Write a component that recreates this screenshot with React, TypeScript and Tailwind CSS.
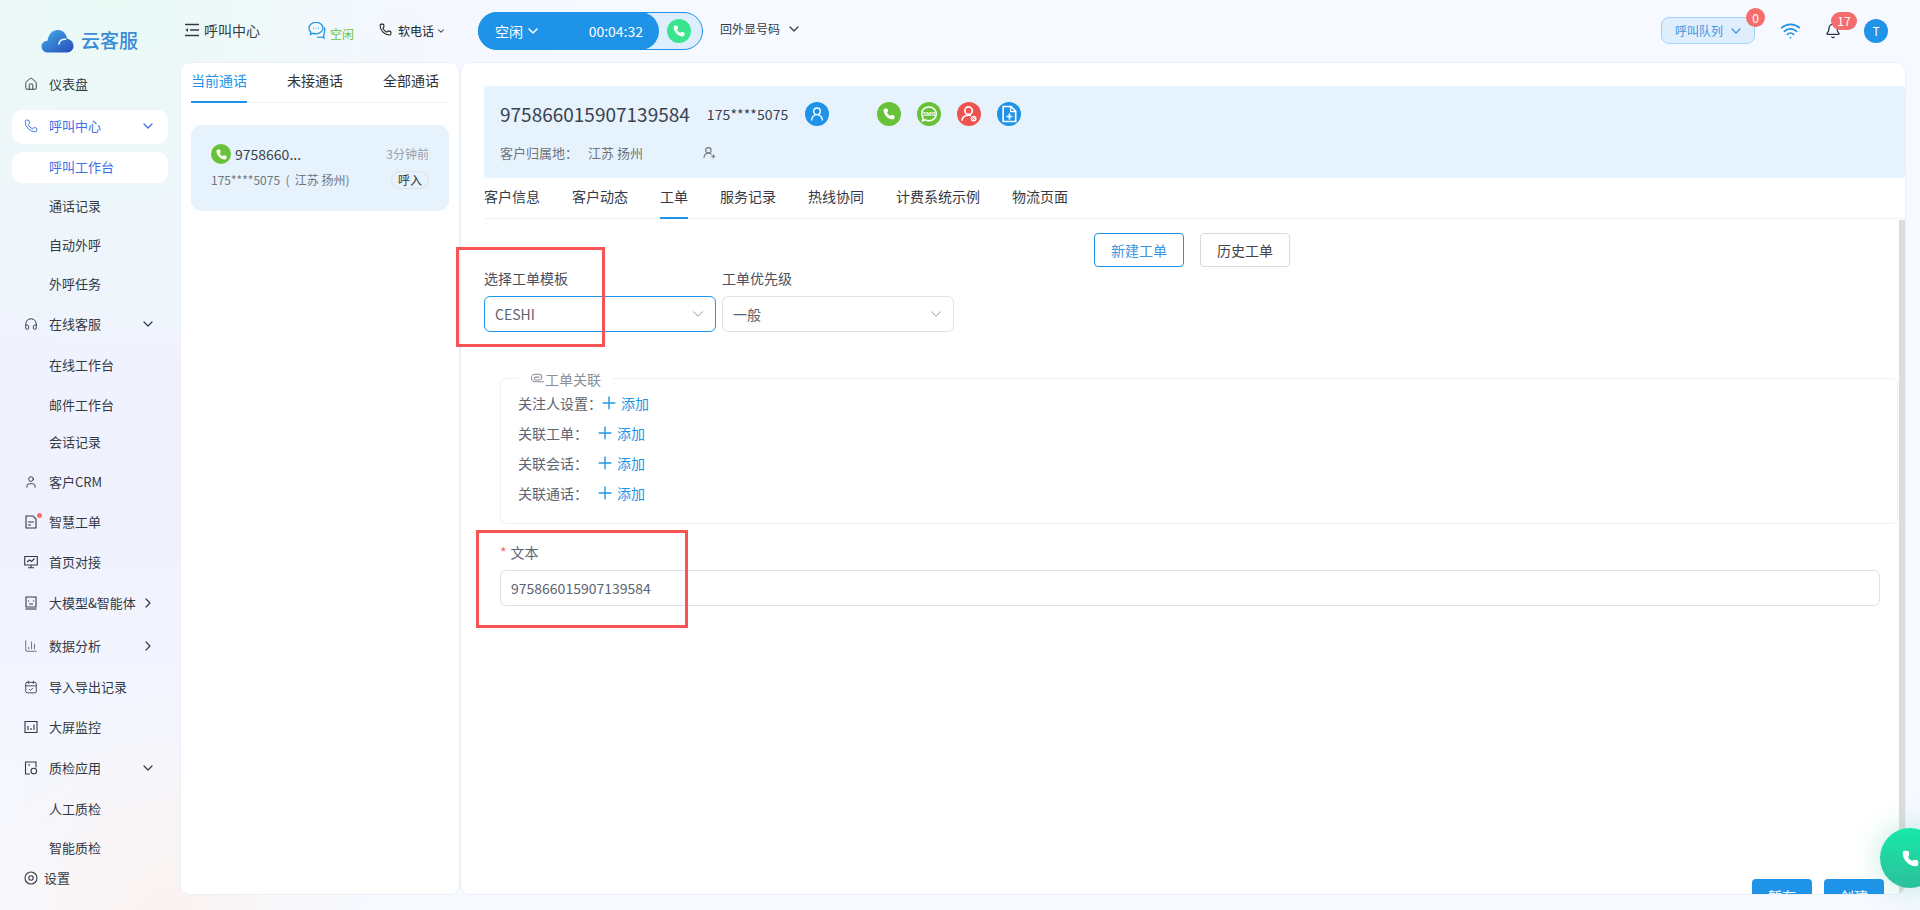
import React from "react";
import { ChevronDown, ChevronRight, House, Headphones, User, Phone, Wifi, Bell, UserRound, Plus, UserRoundPlus, ChartColumn, CalendarCheck } from "lucide-react";

const F = "font-['Noto_Sans_CJK_SC','Noto_Sans',sans-serif]";

const ic = "w-[14px] h-[14px] stroke-[1.6]";

function S({ children, className = "w-[14px] h-[14px]" }: { children: React.ReactNode; className?: string }) {
  return (
    <svg viewBox="0 0 14 14" fill="none" stroke="currentColor" strokeWidth="1.100" className={className}>
      {children}
    </svg>
  );
}

type Row = { t: string; h: string; icon?: React.ReactNode; chev?: "d" | "r"; kind?: "sub" | "active" | "open"; };
const rows: Row[] = [
  { t: "仪表盘", h: "h-[38px] pb-[2px]", icon: <House className={ic} /> },
  { t: "呼叫中心", h: "h-[34px] mt-[6px] pb-[2px]", icon: <Phone className={ic} />, chev: "d", kind: "open" },
  { t: "呼叫工作台", h: "h-[31px] mt-[8px] pb-[2px]", kind: "active" },
  { t: "通话记录", h: "h-[39px] mt-[4px] pb-[2px]", kind: "sub" },
  { t: "自动外呼", h: "h-[39px] pb-[2px]", kind: "sub" },
  { t: "外呼任务", h: "h-[39px] pb-[2px]", kind: "sub" },
  { t: "在线客服", h: "h-[41px] pb-[2px]", icon: <Headphones className={ic} />, chev: "d" },
  { t: "在线工作台", h: "h-[42px] pb-[2px]", kind: "sub" },
  { t: "邮件工作台", h: "h-[37px] pb-[2px]", kind: "sub" },
  { t: "会话记录", h: "h-[38px] pb-[2px]", kind: "sub" },
  { t: "客户CRM", h: "h-[40px]", icon: <User className={ic} /> },
  {
    t: "智慧工单", h: "h-[40px]", icon: (
      <S><path d="M2 1h7l3 3v9H2z" /><path d="M4 7h6M4 10h3" /></S>
    )
  },
  {
    t: "首页对接", h: "h-[40px]", icon: (
      <S><path d="M.7 1.500h12.600v8.500H.7z" /><path d="M3 7l2.500-2 2 1.500 3-3M7 10v2.500M4 12.800h6" /></S>
    )
  },
  {
    t: "大模型&智能体", h: "h-[42px]", icon: (
      <S><path d="M2 1h10v10H2z" /><path d="M1.500 13h11" /><path d="M4.500 4.500v1M9.500 4.500v1M5 8h4" /></S>
    ), chev: "r"
  },
  { t: "数据分析", h: "h-[44px]", icon: <ChartColumn className="w-[14px] h-[14px] stroke-[1.200]" />, chev: "r" },
  { t: "导入导出记录", h: "h-[38px]", icon: <CalendarCheck className="w-[14px] h-[14px] stroke-[1.500]" /> },
  {
    t: "大屏监控", h: "h-[42px]", icon: (
      <S><path d="M1 1.500h12v11H1z" /><path d="M4 10V6M7 10V8M10 10V4.500" /></S>
    )
  },
  {
    t: "质检应用", h: "h-[40px]", icon: (
      <S><path d="M6 13H1.500V1H12v5.500" /><circle cx="9.800" cy="10" r="2.800" /><path d="M4 4h2" /></S>
    ), chev: "d"
  },
  { t: "人工质检", h: "h-[42px]", kind: "sub" },
  { t: "智能质检", h: "h-[36px]", kind: "sub" },
];

function Sidebar() {
  return (
    <aside className="w-[180px] shrink-0 flex flex-col h-[910px] overflow-hidden">
      <div className="h-[66px] shrink-0 flex items-start pt-[27px] pl-[41px] gap-[7px]">
        <svg width="33" height="24" viewBox="0 0 33 24" className="mt-[2px]">
          <defs><linearGradient id="cl" x1="0" y1="0" x2="1" y2="1"><stop offset="0" stopColor="#3fb0ea" /><stop offset="1" stopColor="#2a49b8" /></linearGradient></defs>
          <path d="M7 23.500C3 23.500 .5 20.800 .5 17.500 .5 14.500 3 12 6.500 11.800 7.500 5 11.500 1 17 1 22 1 25.500 5 26 9.800 30 10.500 32.500 13.500 32.500 17 32.500 20.500 30 23.500 26 23.500Z" fill="url(#cl)" />
          <path d="M18 15c.3-3 3-5 6.500-4.800" stroke="#fff" strokeWidth="1.600" fill="none" strokeLinecap="round" />
        </svg>
        <span className="text-[19px] leading-[26px] font-medium text-[#3a8bd8]">云客服</span>
      </div>
      <nav className="flex flex-col shrink-0">
        {rows.map((r) => {
          const blue = r.kind === "open" || r.kind === "active";
          const box = blue ? "bg-white rounded-[10px]" : "";
          return (
            <div key={r.t} className={`${r.h} ${box} shrink-0 mx-[12px] flex items-center pl-[12px] text-[13px] ${blue ? "text-[#3f6fe8]" : "text-[#333a45]"}`}>
              <span className="w-[25px] shrink-0 flex relative">
                {r.icon}
                {r.t === "智慧工单" && <span className="absolute left-[13px] top-[-2px] w-[5px] h-[5px] rounded-full bg-[#f56c6c]" />}
              </span>
              <span className="whitespace-nowrap">{r.t}</span>
              {r.chev === "d" && <ChevronDown className="w-[16px] h-[16px] stroke-[1.800] ml-auto mr-[12px]" />}
              {r.chev === "r" && <ChevronRight className="w-[16px] h-[16px] stroke-[1.800] ml-auto mr-[12px]" />}
            </div>
          );
        })}
      </nav>
      <div className="flex items-center pl-[24px] gap-[6px] text-[13px] text-[#333a45] mt-[2px] h-[20px]">
        <S><circle cx="7" cy="7" r="6" /><circle cx="7" cy="7" r="2.200" /></S>
        <span>设置</span>
      </div>
    </aside>
  );
}

function Header() {
  return (
    <header className="h-[62px] shrink-0 flex items-center text-[12px] text-[#333a45] relative">
      <svg viewBox="0 0 14 14" className="w-[14px] h-[14px] ml-[5px] mt-[-2px]" fill="none" stroke="#333a45" strokeWidth="1.300">
        <path d="M0 1.500h14M5 7h9M0 12.500h14" />
        <path d="M3 5v4L.5 7z" fill="#333a45" stroke="none" />
      </svg>
      <span className="ml-[5px] text-[14px] mt-[-2px]">呼叫中心</span>
      <svg viewBox="0 0 18 18" className="w-[18px] h-[18px] ml-[48px] mt-[-3px]" fill="none" stroke="#2196e8" strokeWidth="1.300">
        <path d="M8 1.200c-3.800 0-7 2.700-7 6 0 1.700.8 3 2 4l-.6 2.300 2.800-1.200c.9.300 1.800.5 2.800.5 3.800 0 7-2.700 7-5.800 0-3.200-3.200-5.800-7-5.800z" />
        <path d="M16.500 6.500c.7 3.500-.5 7-1 8.500l.6 2-2.600-1c-1.500.5-3 .5-4.500 0" />
        <path d="M5 7.200h.6M7.700 7.200h.6M10.400 7.200h.6" strokeWidth="1.400" />
      </svg>
      <span className="text-[12px] text-[#67c23a] ml-[4px] mt-[6px]">空闲</span>
      <Phone className="w-[13px] h-[13px] ml-[25px] mt-[-3px] text-[#222]" />
      <span className="ml-[6px] mt-[-1px] text-[#222]">软电话</span>
      <ChevronDown className="w-[10px] h-[10px] ml-[2px] stroke-[2.500]" />
      <div className="ml-[32px] w-[225px] h-[38px] rounded-[19px] border border-[#1f93e8] bg-[#dfeefc] flex items-center justify-between">
        <div className="w-[181px] h-[38px] rounded-[19px] bg-[#1f93e8] text-white flex items-center text-[14px] pl-[17px] shrink-0 ml-[-1px]">
          <span>空闲</span>
          <ChevronDown className="w-[16px] h-[16px] ml-[2px] stroke-[2.200]" />
          <span className="ml-[auto] mr-[16px]">00:04:32</span>
        </div>
        <span className="w-[24px] h-[24px] rounded-full bg-[#3ae58f] flex items-center justify-center mr-[11px]">
          <Phone className="w-[12px] h-[12px] text-white fill-white" />
        </span>
      </div>
      <span className="ml-[17px] mt-[-4px] text-[12px]">回外显号码</span>
      <ChevronDown className="w-[16px] h-[16px] ml-[6px] mt-[-4px] stroke-[1.800]" />
      <div className="ml-auto flex items-center relative mr-[32px] mt-[-1px]">
        <div className="w-[94px] h-[27px] rounded-[8px] bg-[#dfeefc] border border-[#a3d3fa] text-[#3d94e0] text-[12px] flex items-center pl-[13px] relative">
          呼叫队列
          <ChevronDown className="w-[16px] h-[16px] ml-[5px] stroke-[1.800]" />
          <span className="absolute right-[-11px] top-[-10px] w-[19px] h-[19px] rounded-full bg-[#f56c6c] text-white text-[12px] flex items-center justify-center">0</span>
        </div>
        <Wifi className="w-[21px] h-[21px] text-[#1f93e8] ml-[25px]" />
        <div className="relative ml-[24px]">
          <Bell className="w-[16px] h-[16px] text-[#2c3345]" />
          <span className="absolute left-[6px] top-[-11px] w-[26px] h-[18px] rounded-full bg-[#f56c6c] text-white text-[12px] flex items-center justify-center">17</span>
        </div>
        <span className="ml-[23px] w-[24px] h-[24px] rounded-full bg-[#1f93e8] text-white text-[12px] flex items-center justify-center">T</span>
      </div>
    </header>
  );
}

function ListPanel() {
  return (
    <section className="w-[280px] shrink-0 bg-white rounded-[10px] border border-[#eceff6] flex flex-col px-[10px] h-[833px]">
      <div className="flex justify-between h-[40px] border-b border-[#eef0f4] text-[14px] text-[#333]">
        <span className="text-[#2196e8] border-b-2 border-[#1f93e8] h-[40px] leading-[34px] w-[56px]">当前通话</span>
        <span className="leading-[34px] ml-[40px]">未接通话</span>
        <span className="leading-[34px] ml-[40px] mr-[10px]">全部通话</span>
      </div>
      <div className="mt-[22px] h-[86px] rounded-[10px] bg-[#e6f2fc] px-[20px] pt-[19px]">
        <div className="flex items-center h-[20px]">
          <span className="w-[20px] h-[20px] rounded-full bg-[#67c23a] flex items-center justify-center">
            <Phone className="w-[11px] h-[11px] text-white fill-white" />
          </span>
          <span className="ml-[4px] text-[14px] text-[#3a4250]">9758660...</span>
          <span className="ml-auto text-[12px] text-[#9aa1ab]">3分钟前</span>
        </div>
        <div className="flex items-center h-[18px] mt-[7px]">
          <span className="text-[12px] text-[#70757d] whitespace-pre">175****5075  (  江苏 扬州)</span>
          <span className="ml-auto w-[38px] h-[18px] rounded-full border border-[#e0e3e8] text-[12px] text-[#333] flex items-center justify-center">呼入</span>
        </div>
      </div>
    </section>
  );
}

function Circle({ cls, children }: { cls: string; children: React.ReactNode }) {
  return <span className={`w-[24px] h-[24px] rounded-full flex items-center justify-center text-white shrink-0 ${cls}`}>{children}</span>;
}

const selectCls = "w-[232px] h-[36px] rounded-[6px] bg-white flex items-center pl-[10px] pr-[8px] text-[14px] text-[#5c6470]";

function Assoc({ label, w }: { label: string; w: string }) {
  return (
    <div className="h-[30px] flex items-center text-[14px] text-[#5c6470]">
      <span className={w}>{label}</span>
      <Plus className="w-[20px] h-[20px] mx-[-4px] text-[#2196e8] stroke-[1.700]" />
      <span className="ml-[6px] text-[#2196e8]">添加</span>
    </div>
  );
}

function Main() {
  return (
    <section className="relative w-[1446px] shrink-0 bg-white rounded-[10px] border border-[#eceff6] h-[833px] overflow-hidden">
      <div className="ml-[23px] mt-[23px] h-[92px] bg-[#e6f2fc] rounded-[4px] pl-[16px] pt-[16px]">
        <div className="flex items-center h-[24px]">
          <span className="text-[19px] text-[#3a4250]">975866015907139584</span>
          <span className="ml-[17px] text-[14px] text-[#3a4250] tracking-[0.1px]">175****5075</span>
          <Circle cls="bg-[#1f93e8] ml-[17px]"><UserRound className="w-[16px] h-[16px]" /></Circle>
          <Circle cls="bg-[#67c23a] ml-[48px]"><Phone className="w-[12px] h-[12px] fill-white" /></Circle>
          <Circle cls="bg-[#67c23a] ml-[16px]">
            <svg viewBox="0 0 24 24" className="w-[20px] h-[20px]">
              <path d="M12 3.500c-5 0-8.800 3.600-8.800 8.300 0 2 .7 3.800 1.900 5.200l-.8 3.200 3.500-1.200c1.300.7 2.700 1.100 4.200 1.100 5 0 8.800-3.700 8.800-8.300S17 3.500 12 3.500z" fill="none" stroke="#fff" strokeWidth="1.800" />
              <text x="12" y="14.300" textAnchor="middle" fontSize="7" fontWeight="700" fill="#fff" fontFamily="Liberation Sans, sans-serif">SMS</text>
            </svg>
          </Circle>
          <Circle cls="bg-[#ef5350] ml-[16px]">
            <svg viewBox="0 0 24 24" className="w-[20px] h-[20px]" fill="none" stroke="#fff" strokeWidth="2">
              <circle cx="11.500" cy="8" r="4.500" />
              <path d="M3.500 20c.5-4 3.500-6.500 8-6.500 1 0 2 .1 2.800.4" />
              <circle cx="17.500" cy="17.500" r="3.500" fill="#fff" stroke="none" />
              <path d="M16 16l3 3M19 16l-3 3" stroke="#ef5350" strokeWidth="1" />
            </svg>
          </Circle>
          <Circle cls="bg-[#1f93e8] ml-[16px]">
            <svg viewBox="0 0 24 24" className="w-[20px] h-[20px]" fill="none" stroke="#fff" strokeWidth="2">
              <path d="M5 3h9.500L20 8.500V21H5z" />
              <path d="M14 3v6h6" strokeWidth="1.500" />
              <path d="M12.500 11.500v7M9 15h7" />
            </svg>
          </Circle>
        </div>
        <div className="flex items-center mt-[17px] text-[13px] text-[#70757d]">
          <span>客户归属地：</span>
          <span className="ml-[10px]">江苏 扬州</span>
          <UserRoundPlus className="ml-[60px] w-[13px] h-[13px]" />
        </div>
      </div>
      <div className="ml-[23px] h-[41px] border-b border-[#eef0f4] flex gap-[32px] text-[14px] text-[#333a45]">
        {["客户信息", "客户动态", "工单", "服务记录", "热线协同", "计费系统示例", "物流页面"].map((t) => (
          <span key={t} className={`h-[41px] leading-[36px] ${t === "工单" ? "border-b-2 border-[#1f93e8]" : ""}`}>{t}</span>
        ))}
      </div>
      <div className="absolute right-0 top-[157px] bottom-0 w-[6px] bg-[#dcdcdc]" />
      <div className="flex gap-[16px] mt-[14px] ml-[633px] text-[14px]">
        <span className="w-[90px] h-[34px] rounded-[4px] border border-[#1f93e8] text-[#3d94e0] flex items-center justify-center">新建工单</span>
        <span className="w-[90px] h-[34px] rounded-[4px] border border-[#d8dbe2] text-[#444] flex items-center justify-center">历史工单</span>
      </div>
      <div className="ml-[23px] mt-[-2px] flex gap-[6px] text-[14px] text-[#4a5160]">
        <div>
          <div className="h-[31px] leading-[20px] pt-[3px]">选择工单模板</div>
          <div className={`${selectCls} border border-[#1f93e8]`}>CESHI<ChevronDown className="ml-auto w-[18px] h-[18px] text-[#8a8f98] stroke-[1.200]" /></div>
        </div>
        <div>
          <div className="h-[31px] leading-[20px] pt-[3px]">工单优先级</div>
          <div className={`${selectCls} border border-[#dfe1e8]`}>一般<ChevronDown className="ml-auto w-[18px] h-[18px] text-[#8a8f98] stroke-[1.200]" /></div>
        </div>
      </div>
      <fieldset className="relative ml-[39px] mr-[7px] mt-[46px] h-[146px] rounded-[6px] border border-[#eef0f4] pl-[17px] pt-[9px]">
        <div className="absolute left-[17px] top-[-9px] bg-white pr-[12px] pl-[12px] flex items-center text-[14px] text-[#8a8f98] leading-[18px]">
          <svg viewBox="0 0 16 12" className="w-[15px] h-[12px]" fill="none" stroke="#8a8f98" strokeWidth="1.100">
            <path d="M15 9H5.500a4 4 0 0 1 0-8h4a3 3 0 0 1 0 6H6a1.500 1.500 0 0 1 0-3h4" />
          </svg>
          工单关联
        </div>
        <Assoc label="关注人设置：" w="w-[85px]" />
        <Assoc label="关联工单：" w="w-[81px]" />
        <Assoc label="关联会话：" w="w-[81px]" />
        <Assoc label="关联通话：" w="w-[81px]" />
      </fieldset>
      <div className="ml-[39px] mr-[25px] mt-[18px]">
        <div className="text-[14px] text-[#5c6470] h-[22px] leading-[20px]"><span className="text-[#f56c6c] mr-[4px]">*</span>文本</div>
        <div className="h-[36px] mt-[6px] rounded-[6px] border border-[#dfe1e8] flex items-center pl-[10px] text-[14px] text-[#5c6470]">975866015907139584</div>
      </div>
      <div className="absolute right-[21px] top-[816px] flex gap-[12px] text-[14px] text-white">
        <span className="w-[60px] h-[34px] rounded-[4px] bg-[#1f93e8] flex items-center justify-center">暂存</span>
        <span className="w-[60px] h-[34px] rounded-[4px] bg-[#1f93e8] flex items-center justify-center">创建</span>
      </div>
    </section>
  );
}

export default function App() {
  return (
    <div className={`${F} relative w-[1920px] h-[910px] overflow-hidden bg-[radial-gradient(circle_at_170px_920px,#fbf2f1_0,rgba(251,242,241,0)_220px),radial-gradient(circle_at_120px_-20px,#e9faf5_0,rgba(233,250,245,0)_380px),linear-gradient(180deg,#f3f6fe_0%,#eff2fd_55%,#f7faff_100%)] flex`}>
      <Sidebar />
      <div className="flex flex-col w-[1740px] bg-[linear-gradient(90deg,rgba(255,255,255,0)_0,#f6f9ff_400px)]">
        <Header />
        <div className="flex">
          <ListPanel />
          <Main />
        </div>
      </div>
      <div className="absolute left-[456px] top-[247px] w-[149px] h-[100px] border-[3px] border-[#f75555]" />
      <div className="absolute left-[476px] top-[530px] w-[212px] h-[98px] border-[3px] border-[#f75555]" />
      <div className="absolute left-[1880px] top-[828px] w-[60px] h-[60px] rounded-full bg-[linear-gradient(180deg,#17e8a8,#2cc09a)] shadow-[0_0_30px_rgba(40,190,150,0.3)] flex items-center pl-[22px]">
        <Phone className="w-[17px] h-[17px] text-white fill-white" />
      </div>
    </div>
  );
}
